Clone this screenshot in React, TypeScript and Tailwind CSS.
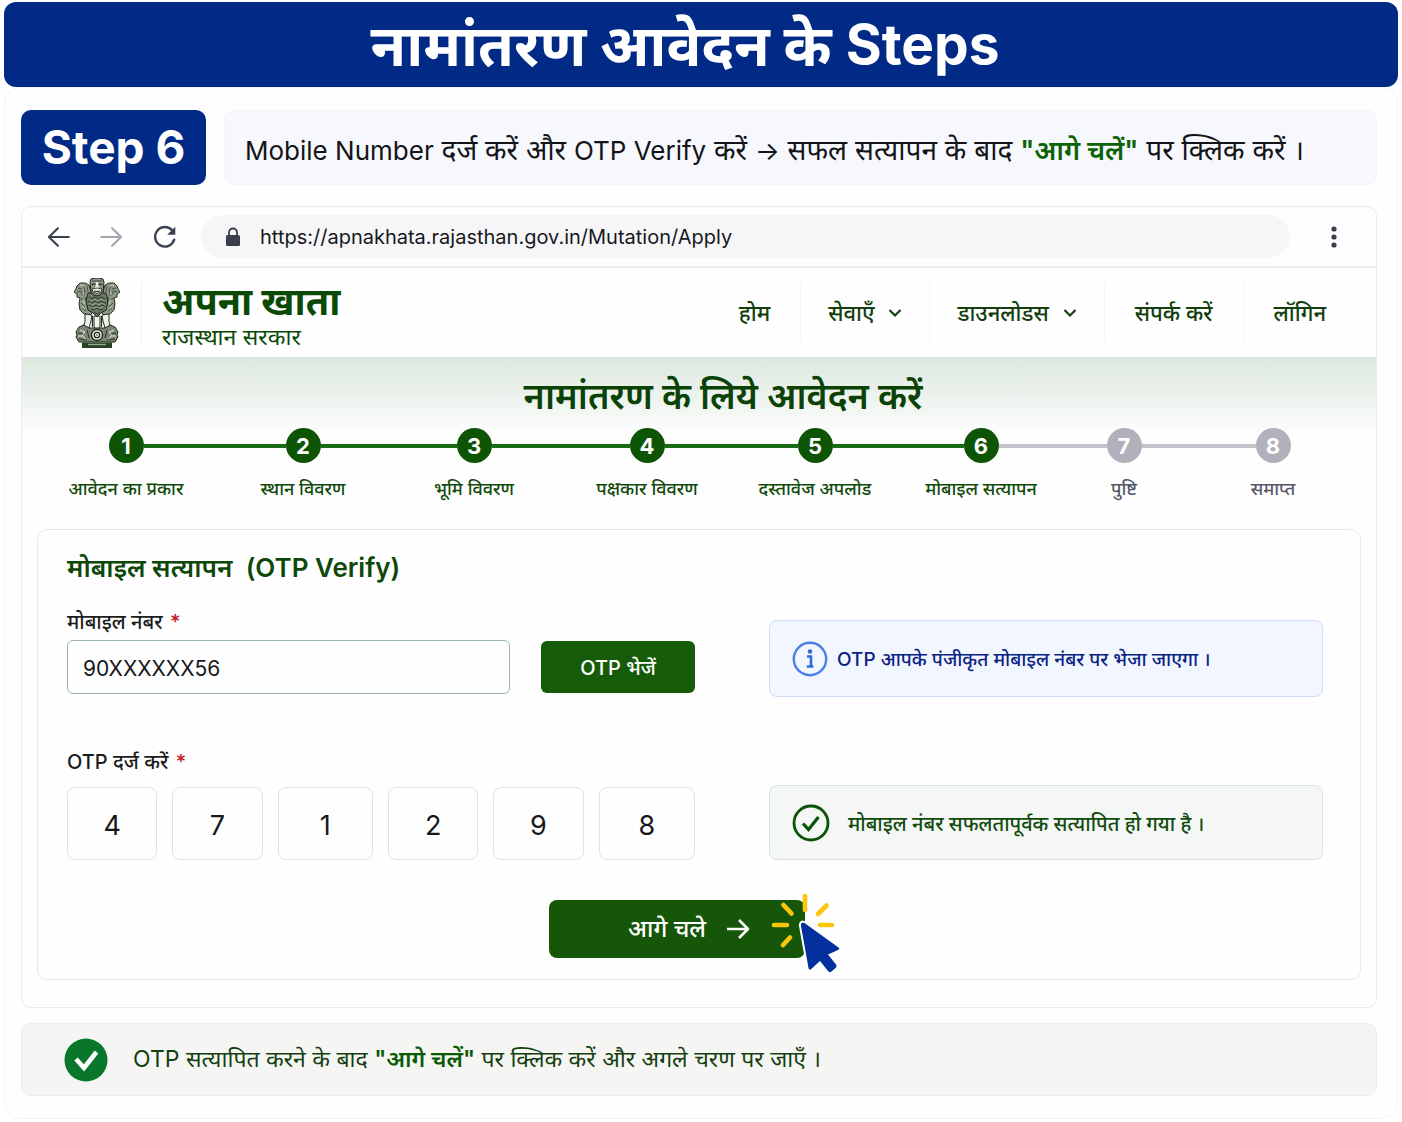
import { useState } from 'react';

const NAV = [
  { label: 'होम', menu: false },
  { label: 'सेवाएँ', menu: true },
  { label: 'डाउनलोडस', menu: true },
  { label: 'संपर्क करें', menu: false },
  { label: 'लॉगिन', menu: false },
];

const STEPS = [
  'आवेदन का प्रकार',
  'स्थान विवरण',
  'भूमि विवरण',
  'पक्षकार विवरण',
  'दस्तावेज अपलोड',
  'मोबाइल सत्यापन',
  'पुष्टि',
  'समाप्त',
];

const CURRENT = 6;

function Emblem() {
  return (
    <svg viewBox="0 0 46 70" className="h-[70px] w-[46px] shrink-0" aria-hidden="true">
      {/* side lions */}
      <g fill="#8d9786" stroke="#24301f" strokeWidth="1" strokeLinejoin="round">
        <path d="M15 7 11 5 6 5 3 8 2 11 0 14 3 16 3 19 6 20 5 26 6 32 10 36 16 37 19 34 17 14Z" />
        <path d="M31 7 35 5 40 5 43 8 44 11 46 14 43 16 43 19 40 20 41 26 40 32 36 36 30 37 27 34 29 14Z" />
      </g>
      <g fill="none" stroke="#2a3525" strokeWidth=".7">
        <path d="M4 10l4 1M3 14l4-1 1 4M9 8l2 4-1 6M13 8l1 6M7 20l3 3M7 25l4 4M8 30l4 3M11 19l2 6M13 27l2 6" />
        <path d="M42 10l-4 1M43 14l-4-1-1 4M37 8l-2 4 1 6M33 8l-1 6M39 20l-3 3M39 25l-4 4M38 30l-4 3M35 19l-2 6M33 27l-2 6" />
      </g>
      <g fill="none" stroke="#dfe3d8" strokeWidth=".8">
        <path d="M6 7l4 1M9 14l1 3M9 22l2 4M8 28l3 3M40 7l-4 1M37 14l-1 3M37 22l-2 4M38 28l-3 3" />
      </g>
      {/* legs */}
      <g fill="#f0f1ea" stroke="#24301f" strokeWidth="1" strokeLinejoin="round">
        <path d="M11 36 11 44 9 49 15 50 17 43 18 37Z" />
        <path d="M35 36 35 44 37 49 31 50 29 43 28 37Z" />
        <path d="M20 38 20 48 21 52 25 52 26 48 26 38Z" />
      </g>
      <path d="M18.500 38v11M27.500 38v11" stroke="#24301f" strokeWidth="1.200" />
      {/* front lion */}
      <path d="M14 15 12 23 14 32 19 35 23 39 27 35 32 32 34 23 32 15Z" fill="#6c7665" stroke="#1e281a" />
      <path
        d="M15 19l3 2 3-2 3 2 3-2 4 2M14 23l4 2 3-2 3 2 3-2 5 2M15 27l4 2 3-2 3 2 3-2 3 1M17 31l3 1 3-2 3 2 3-1M20 34l3 2 3-2"
        fill="none"
        stroke="#1d2719"
        strokeWidth=".8"
      />
      <path
        d="M15 21l3 2 3-2 3 2 3-2 4 2M15 25l4 2 3-2 3 2 3-2 3 2M17 29l3 1 3-1 3 1 3-1"
        fill="none"
        stroke="#b9c0b1"
        strokeWidth=".6"
      />
      <path d="M17 1 21 0h4l4 1 1 3-1 10-3 3-3 1-3-1-3-3-1-10Z" fill="#8c9685" stroke="#1d2719" />
      <path d="M18 3h10" stroke="#333e2e" strokeWidth=".8" />
      <path d="M18 7q2-2 4 0M24 7q2-2 4 0" fill="none" stroke="#161d13" strokeWidth="1.1" />
      <path d="M22 4h2l1 7h-4Z" fill="#f0f1ea" />
      <path d="M18 11q5-2 10 0l-1 3q-4 3-8 0Z" fill="#eef0e8" stroke="#161d13" strokeWidth=".8" />
      <path d="M20 13q3 1 6 0" fill="none" stroke="#161d13" />
      {/* abacus and wheel */}
      <path
        d="M5 49 10 47l5 3h16l5-3 5 2 3 5-1 3 1 2-3 5H5l-3-5 1-2-1-3Z"
        fill="#7b8674"
        stroke="#1c2a18"
        strokeLinejoin="round"
      />
      <path d="M6 52l5 2-3 3 4 5M40 52l-5 2 3 3-4 5M4 58h5M37 58h5" fill="none" stroke="#e3e6dc" strokeWidth="1" />
      <path d="M4 55l5 1M5 61l8 1M13 52l2 8M42 55l-5 1M41 61l-8 1M33 52l-2 8" stroke="#1c2a18" strokeWidth=".9" />
      <circle cx="23" cy="57" r="5.500" fill="#f3f4ee" stroke="#1c2518" strokeWidth="1.3" />
      <circle cx="23" cy="57" r="2.700" fill="#fff" stroke="#1c2518" strokeWidth="1.3" />
      <circle cx="23" cy="57" r=".8" fill="#1c2518" />
      <path d="M8 64.500h30V70H8Z" fill="#24451f" />
      <path d="M14 66.500h18" stroke="#97a58f" strokeWidth="1.400" />
    </svg>
  );
}

function ClickCursor() {
  return (
    <svg
      viewBox="0 0 72 84"
      className="pointer-events-none absolute -top-2 -right-9 h-[84px] w-[72px]"
      aria-hidden="true"
    >
      <g stroke="#fcc70a" strokeWidth="4.600" strokeLinecap="round">
        <path d="M36 4v14M14.500 13l8 8.500M57.500 13.500 49 22M5 33h13M51 33h12M14 53l7-7.500" />
      </g>
      <path
        d="M32 34 39.500 76q.7 3 3 .8L51 69l8 10q1.500 2 3.500.5l4-3.500q2-1.700.5-3.500L59 62.500l10-4.500q2.500-1.200.2-2.700L35.500 31Q31.500 29.500 32 34Z"
        fill="#03309c"
        stroke="#fff"
        strokeWidth="4"
        strokeLinejoin="round"
        paintOrder="stroke"
      />
    </svg>
  );
}

function Toolbar() {
  return (
    <div className="flex h-[61px] items-center border-b-2 border-[#eceef3] pr-8 pl-6">
      <button type="button" aria-label="Back" className="text-[#3c4152]">
        <svg viewBox="0 0 24 24" className="size-[26px]" fill="none" stroke="currentColor" strokeWidth="2" strokeLinecap="round" strokeLinejoin="round">
          <path d="M21 12H3M11 4 2.700 12l8.300 8" />
        </svg>
      </button>
      <button type="button" aria-label="Forward" className="ml-[26px] text-[#a3a6b0]">
        <svg viewBox="0 0 24 24" className="size-[26px]" fill="none" stroke="currentColor" strokeWidth="2" strokeLinecap="round" strokeLinejoin="round">
          <path d="M3 12h18M13 4l8.300 8-8.300 8" />
        </svg>
      </button>
      <button type="button" aria-label="Reload" className="ml-7 text-[#3c4152]">
        <svg viewBox="0 0 24 24" className="size-[26px]" fill="none" stroke="currentColor" strokeWidth="2.200" strokeLinecap="round">
          <path d="M20.500 14.500A9 9 0 1 1 18.800 6" />
          <path d="M21.500 2.500v7.500H14Z" fill="currentColor" stroke="none" />
        </svg>
      </button>
      <div className="ml-[23px] flex h-[43px] flex-1 items-center rounded-full bg-[#f6f6f8] pl-6">
        <svg viewBox="0 0 16 20" className="h-5 w-4" aria-hidden="true">
          <path d="M4 9V5.500a4 4 0 0 1 8 0V9" fill="none" stroke="#3a3e4c" strokeWidth="1.800" />
          <rect x="1" y="8" width="14" height="11" rx="1.500" fill="#3a3e4c" />
        </svg>
        <input
          aria-label="Address"
          readOnly
          value="https://apnakhata.rajasthan.gov.in/Mutation/Apply"
          className="ml-[19px] flex-1 bg-transparent text-[20px] leading-7 text-[#17181c] outline-none"
        />
      </div>
      <button type="button" aria-label="Menu" className="ml-[34px]">
        <svg viewBox="0 0 20 24" className="h-6 w-5" fill="#3a3e4c">
          <circle cx="10" cy="4" r="2.600" />
          <circle cx="10" cy="12" r="2.600" />
          <circle cx="10" cy="20" r="2.600" />
        </svg>
      </button>
    </div>
  );
}

function SiteHeader() {
  return (
    <header className="flex h-[90px] items-center border-b border-[#d5dfd7] pl-[52px]">
      <Emblem />
      <div className="ml-[21px] h-16 w-px bg-[#f2f3f5]" />
      <div className="ml-5 pt-1 text-[#0b4a06]">
        <p className="text-[38px] leading-[44px] font-bold">अपना खाता</p>
        <p className="text-[23px] leading-7">राजस्थान सरकार</p>
      </div>
      <nav className="ml-auto flex divide-x divide-[#f4f5f6] pr-5 text-[22px] leading-[60px] font-medium text-[#123f0d]">
        {NAV.map((item) => (
          <a
            key={item.label}
            href="#"
            className={'flex items-center gap-[14px] ' + (item.menu ? 'px-[27px]' : 'px-[30px]')}
          >
            {item.label}
            {item.menu && (
              <svg viewBox="0 0 14 10" className="h-[10px] w-[14px]" fill="none" stroke="currentColor" strokeWidth="2.200">
                <path d="m1.500 2 5.500 5.500L12.500 2" />
              </svg>
            )}
          </a>
        ))}
      </nav>
    </header>
  );
}

function Stepper() {
  return (
    <ol className="grid grid-cols-[176fr_178fr_164fr_182fr_154fr_178fr_108fr_190fr] pr-2 pl-4">
      {STEPS.map((label, i) => {
        const n = i + 1;
        const done = n <= CURRENT;
        const left = i === 0 ? '' : done ? 'bg-[#1a6b18]' : 'bg-[#c3c4cb]';
        const right = n === STEPS.length ? '' : n < CURRENT ? 'bg-[#1a6b18]' : 'bg-[#c3c4cb]';
        return (
          <li key={label} className="flex flex-col">
            <div className="flex items-center">
              <span className={`h-1 flex-1 ${left}`} />
              <span
                className={
                  'flex size-[35px] items-center justify-center rounded-full text-[22px] leading-none font-bold text-white ' +
                  (done ? 'bg-[#0d5405]' : 'bg-[#b0b1ba]')
                }
              >
                {n}
              </span>
              <span className={`h-1 flex-1 ${right}`} />
            </div>
            <span
              className={
                'mt-3 text-center text-[18px] leading-7 font-medium whitespace-nowrap ' +
                (done ? 'text-[#124b0c]' : 'text-[#55586a]')
              }
            >
              {label}
            </span>
          </li>
        );
      })}
    </ol>
  );
}

function OtpForm() {
  const [mobile, setMobile] = useState('90XXXXXX56');
  const [otp, setOtp] = useState(['4', '7', '1', '2', '9', '8']);

  return (
    <form
      onSubmit={(e) => e.preventDefault()}
      className="mx-[15px] mt-[26px] rounded-[10px] border border-[#e6e8ea] pt-[18px] pr-[37px] pb-[21px] pl-[29px]"
    >
      <h3 className="text-[26px] leading-10 font-semibold whitespace-pre text-[#0d480a]">
        मोबाइल सत्यापन{'  '}(OTP Verify)
      </h3>
      <div className="mt-4 grid grid-cols-[628fr_554fr] gap-x-[74px]">
        <div>
          <label htmlFor="mobile" className="block text-[20px] leading-9 font-medium text-[#1b1c20]">
            मोबाइल नंबर <span className="ml-[2px] text-[#c01818]">*</span>
          </label>
          <div className="flex items-center gap-[31px]">
            <input
              id="mobile"
              value={mobile}
              onChange={(e) => setMobile(e.target.value)}
              className="h-[54px] min-w-0 flex-1 rounded-md border border-[#9bb8a3] px-[15px] pt-[2px] text-[21px] text-[#17181c] outline-none"
            />
            <button type="button" className="h-[52px] w-[154px] rounded-md bg-[#165c08] pt-[2px] text-[20px] font-medium text-white">
              OTP भेजें
            </button>
          </div>
        </div>
        <div className="mt-4 flex h-[77px] items-center gap-[9px] rounded-lg border border-[#cfdcfa] bg-[#f2f6fe] px-[22px]">
          <svg viewBox="0 0 36 36" className="size-[36px] shrink-0" aria-hidden="true">
            <circle cx="18" cy="18" r="16.200" fill="none" stroke="#4a80e8" strokeWidth="2.400" />
            <circle cx="18" cy="10.500" r="2.200" fill="#2f6be0" />
            <path d="M15 15.500h4v9.500M14.800 25.500h6.600" fill="none" stroke="#2f6be0" strokeWidth="2.600" />
          </svg>
          <p className="pt-[3px] text-[19px] leading-7 font-medium whitespace-nowrap text-[#0b2384]">
            OTP आपके पंजीकृत मोबाइल नंबर पर भेजा जाएगा ।
          </p>
        </div>
      </div>

      <div className="mt-[45px] grid grid-cols-[628fr_554fr] gap-x-[74px]">
        <fieldset>
          <legend className="text-[20px] leading-10 font-medium text-[#1b1c20]">
            OTP दर्ज करें <span className="ml-[2px] text-[#c01818]">*</span>
          </legend>
          <div className="mt-[5px] grid grid-cols-[90fr_90fr_95fr_90fr_90fr_96fr] gap-[15px]">
            {otp.map((digit, i) => (
              <input
                key={i}
                aria-label={`OTP ${i + 1}`}
                inputMode="numeric"
                maxLength={1}
                value={digit}
                onChange={(e) => setOtp(otp.map((d, j) => (j === i ? e.target.value : d)))}
                className="h-[73px] w-full min-w-0 rounded-lg border border-[#dfe2e5] pt-1 text-center text-[27px] text-[#17181c] outline-none"
              />
            ))}
          </div>
        </fieldset>
        <div className="flex h-[75px] items-center gap-[18px] self-end rounded-lg border border-[#d8e6db] bg-[#f4f7f5] px-[22px]">
          <svg viewBox="0 0 38 38" className="size-[38px] shrink-0" fill="none" stroke="#0b5209" aria-hidden="true">
            <circle cx="19" cy="19" r="17" strokeWidth="2.800" />
            <path d="m11 19.500 5.500 6L26.500 13" strokeWidth="3.200" />
          </svg>
          <p className="pt-[3px] text-[20px] leading-7 font-medium whitespace-nowrap text-[#124b0c]">
            मोबाइल नंबर सफलतापूर्वक सत्यापित हो गया है ।
          </p>
        </div>
      </div>

      <div className="mt-10 flex justify-center">
        <div className="relative mr-9">
          <button
            type="submit"
            className="flex h-[58px] w-[256px] items-center justify-center gap-5 rounded-lg bg-[#165608] pl-6 text-[24px] font-medium text-white"
          >
            आगे चले
            <svg viewBox="0 0 24 24" className="size-6" fill="none" stroke="currentColor" strokeWidth="2.600" strokeLinejoin="round">
              <path d="M1 12h21M13 3l9 9-9 9" />
            </svg>
          </button>
          <ClickCursor />
        </div>
      </div>
    </form>
  );
}

export default function App() {
  return (
    <div className="min-h-screen bg-white px-1 pt-[2px] pb-[2px] font-[Inter,'Noto_Sans','Noto_Sans_Devanagari',sans-serif]">
      <h1 className="flex h-[85px] items-center justify-center gap-[14px] rounded-xl bg-[#002a86] pr-8 text-[58px] leading-none font-bold text-white">
        नामांतरण आवेदन के <span className="text-[55px]">Steps</span>
      </h1>

      <main className="rounded-2xl border border-[#f0f4fb] bg-[#fefefe] pt-[22px] pr-5 pb-[22px] pl-4">
        <div className="flex gap-[18px]">
          <div className="flex h-[75px] w-[185px] shrink-0 items-center justify-center rounded-[10px] bg-[#002a86] text-[46px] font-bold text-white">
            Step 6
          </div>
          <div className="flex flex-1 items-center rounded-[10px] border border-[#f1f4fb] bg-[#f6f8fd] pt-[6px] pl-[20px]">
            <p className="text-[28px] leading-10 whitespace-nowrap text-[#131418]">
              <span className="text-[26px]">Mobile Number</span> दर्ज करें और{' '}
              <span className="text-[26px]">OTP Verify</span> करें <span className="text-[26px]">→</span>{' '}
              सफल सत्यापन के बाद <b className="text-[27px] font-semibold text-[#0b6305]">"आगे चलें"</b> पर
              क्लिक करें ।
            </p>
          </div>
        </div>

        <section className="mt-[21px] overflow-hidden rounded-[10px] border border-[#eaebf0] pb-[27px]">
          <Toolbar />
          <SiteHeader />
          <div className="bg-[linear-gradient(to_bottom,#dce8de_0px,#fefefe_78px)] pt-[15px]">
            <h2 className="pl-12 text-center text-[36px] leading-[46px] font-semibold text-[#0b4206]">
              नामांतरण के लिये आवेदन करें
            </h2>
            <div className="mt-[9px]">
              <Stepper />
            </div>
          </div>
          <OtpForm />
        </section>

        <footer className="mt-[15px] flex h-[73px] items-center rounded-[10px] border border-[#eceeec] bg-[#f5f6f4] pl-[42px]">
          <svg viewBox="0 0 44 44" className="size-[44px] shrink-0" aria-hidden="true">
            <circle cx="22" cy="22" r="21.500" fill="#08762b" />
            <path d="m12 21 8 9L32.500 14" fill="none" stroke="#fff" strokeWidth="4.600" />
          </svg>
          <p className="ml-[25px] text-[23px] whitespace-pre text-[#153f10]">
            OTP सत्यापित करने के बाद <b className="font-semibold text-[#0b5a05]">"आगे चलें"</b> पर क्लिक करें और अगले चरण पर जाएँ ।
          </p>
        </footer>
      </main>
    </div>
  );
}
